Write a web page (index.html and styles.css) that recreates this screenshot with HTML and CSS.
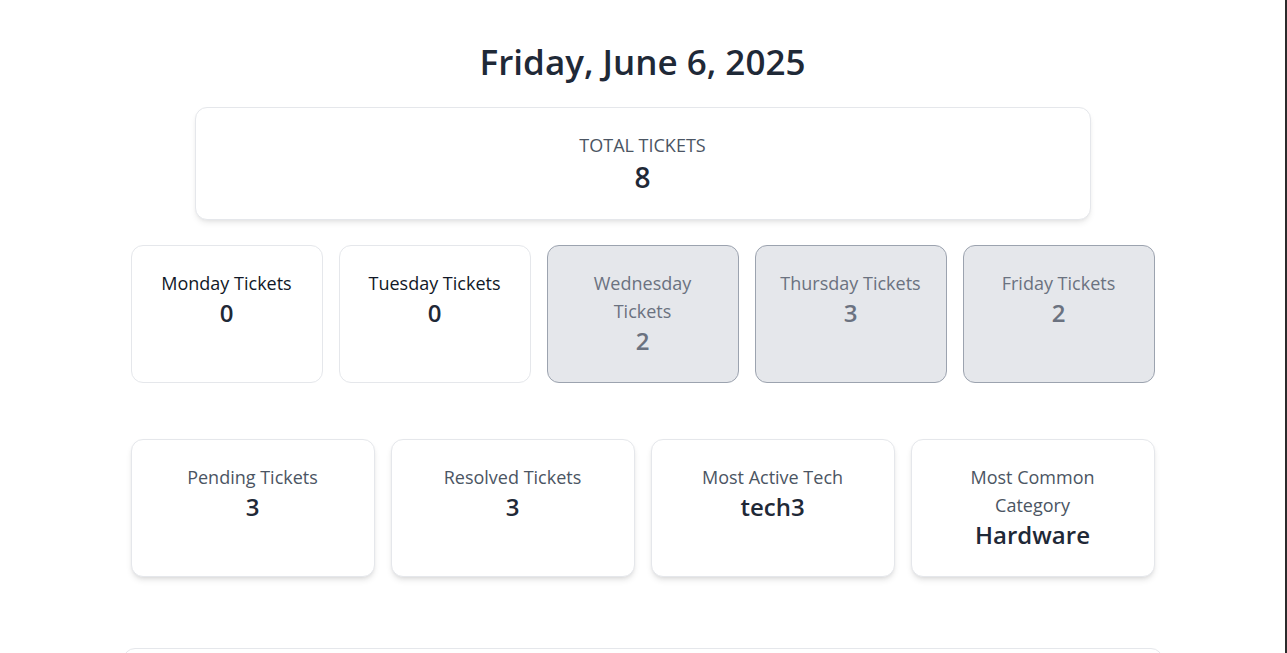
FILE: index.html
```html
<!DOCTYPE html>
<html lang="en">
<head>
<meta charset="utf-8">
<title>Tickets Dashboard</title>
<link rel="stylesheet" href="styles.css">
</head>
<body>
<div class="page">
  <main class="dashboard">
    <h1 class="date-title">Friday, June 6, 2025</h1>

    <section class="total-card">
      <div class="total-label">TOTAL TICKETS</div>
      <div class="total-value">8</div>
    </section>

    <section class="day-grid">
      <div class="card day-card">
        <div class="day-label">Monday Tickets</div>
        <div class="day-value">0</div>
      </div>
      <div class="card day-card">
        <div class="day-label">Tuesday Tickets</div>
        <div class="day-value">0</div>
      </div>
      <div class="card day-card is-past">
        <div class="day-label">Wednesday Tickets</div>
        <div class="day-value">2</div>
      </div>
      <div class="card day-card is-past">
        <div class="day-label">Thursday Tickets</div>
        <div class="day-value">3</div>
      </div>
      <div class="card day-card is-past">
        <div class="day-label">Friday Tickets</div>
        <div class="day-value">2</div>
      </div>
    </section>

    <section class="stat-grid">
      <div class="card stat-card">
        <div class="stat-label">Pending Tickets</div>
        <div class="stat-value">3</div>
      </div>
      <div class="card stat-card">
        <div class="stat-label">Resolved Tickets</div>
        <div class="stat-value">3</div>
      </div>
      <div class="card stat-card">
        <div class="stat-label">Most Active Tech</div>
        <div class="stat-value">tech3</div>
      </div>
      <div class="card stat-card">
        <div class="stat-label">Most Common Category</div>
        <div class="stat-value">Hardware</div>
      </div>
    </section>

    <section class="bottom-card"></section>
  </main>
</div>
</body>
</html>
```

FILE: styles.css
```css
* { box-sizing: border-box; }

html, body {
  margin: 0;
  padding: 0;
  background: #2b2b2b;
}

body {
  font-family: "Open Sans", "Noto Sans", sans-serif;
  color: #1f2937;
  overflow: hidden;
}

.page {
  background: #ffffff;
  margin-right: 2px;
  height: 653px;
  overflow: hidden;
}

.dashboard {
  width: 1024px;
  margin: 0 auto;
  padding-top: 37px;
  display: flex;
  flex-direction: column;
  align-items: center;
}

.date-title {
  margin: 0;
  font-size: 35px;
  line-height: 50px;
  font-weight: 600;
  color: #1f2937;
  text-align: center;
}

.total-card {
  margin-top: 20px;
  width: 896px;
  height: 113px;
  background: #fff;
  border: 1px solid #e5e7eb;
  border-radius: 12px;
  box-shadow: 0 4px 6px -1px rgba(0,0,0,0.08), 0 2px 4px -2px rgba(0,0,0,0.08);
  padding-top: 25px;
  text-align: center;
}

.total-label {
  font-size: 18px;
  line-height: 24px;
  color: #4b5563;
}

.total-value {
  font-size: 28px;
  line-height: 40px;
  font-weight: 600;
  color: #1f2937;
}

.day-grid {
  margin-top: 25px;
  width: 100%;
  display: grid;
  grid-template-columns: repeat(5, 1fr);
  gap: 16px;
}

.card {
  border-radius: 12px;
  padding: 23px 24px 25px;
  text-align: center;
  background: #fff;
  border: 1px solid #e5e7eb;
}

.day-card { min-height: 137px; }

.day-label {
  font-size: 18px;
  line-height: 28px;
  font-weight: 500;
  color: #111827;
}

.day-value {
  font-size: 24px;
  line-height: 32px;
  font-weight: 600;
  color: #1f2937;
}

.day-card.is-past {
  background: #e5e7eb;
  border-color: #9ca3af;
}

.day-card.is-past .day-label,
.day-card.is-past .day-value {
  color: #6b7280;
}

.day-card.is-past .day-label { font-weight: 400; }

.stat-grid {
  margin-top: 56px;
  width: 100%;
  display: grid;
  grid-template-columns: repeat(4, 1fr);
  gap: 16px;
}

.stat-card {
  min-height: 137px;
  box-shadow: 0 4px 6px -1px rgba(0,0,0,0.1), 0 2px 4px -2px rgba(0,0,0,0.1);
}

.stat-label {
  font-size: 18px;
  line-height: 28px;
  color: #4b5563;
}

.stat-value {
  font-size: 24px;
  line-height: 32px;
  font-weight: 600;
  color: #1f2937;
}

.bottom-card {
  margin-top: 71px;
  width: 1040px;
  flex-shrink: 0;
  height: 200px;
  border: 1px solid #e5e7eb;
  border-radius: 12px;
  background: #fff;
}
```
